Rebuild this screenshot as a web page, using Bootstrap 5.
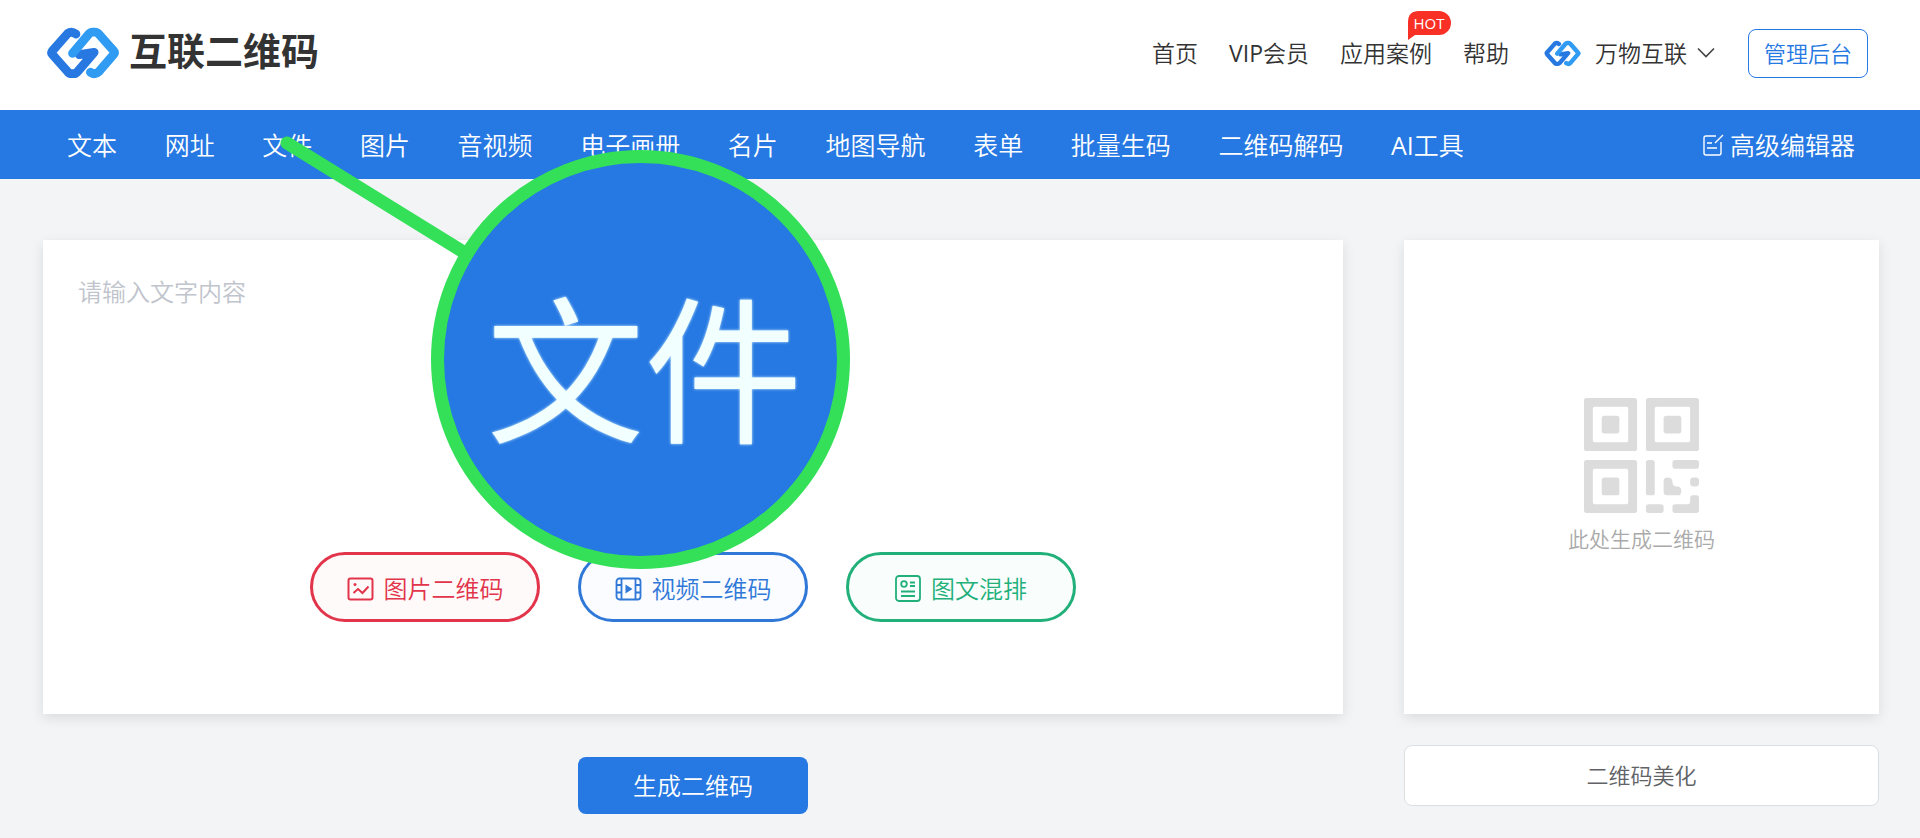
<!DOCTYPE html>
<html lang="zh-CN">
<head>
<meta charset="utf-8">
<meta name="viewport" content="width=device-width, initial-scale=1">
<title>互联二维码</title>
<link rel="stylesheet" href="https://cdn.jsdelivr.net/npm/bootstrap@5.3.0/dist/css/bootstrap.min.css">
<style>
  :root { --brand: #2678e3; --marker: #33e057; }
  body { font-family: "Open Sans", "Noto Sans CJK SC", sans-serif; font-weight: 350; background: #f2f4f6; color: #333; font-size: 24px; line-height: 36px; }
  a { text-decoration: none; color: inherit; }
  button.btn, .btn-mode, textarea { font-weight: 350; }
  .site-head { min-height: 110px; padding: 0 52px 4px 46px; background: #fff; }
  .brand-name { font-size: 38px; line-height: 48px; padding-bottom: 6px; font-weight: 700; color: #333; }
  .brand-link { gap: 9px; }
  .top-links { gap: 31px; font-size: 23px; }
  .user-link { gap: 14px; font-size: 23px; margin-left: 4px; }
  .user-name { gap: 10px; }
  .hot-tag { position: absolute; top: -24px; right: -19px; width: 44px; height: 29px; }
  .hot-tag span { position: absolute; inset: 0; text-align: center; color: #fff; font-size: 15px; line-height: 24px; font-weight: 400; }
  .btn-admin { --bs-btn-color: var(--brand); --bs-btn-border-color: var(--brand); --bs-btn-hover-bg: var(--brand); --bs-btn-hover-color: #fff; width: 120px; height: 49px; margin-left: 2px; padding: 0; font-size: 22px; border-radius: 8px; }
  .type-bar { min-height: 69px; padding: 0 65px 0 67px; background: var(--brand); color: #fff; gap: 238px; font-size: 25px; }
  .editor-link { gap: 6px; }
  .workspace { padding: 61px 41px 24px 43px; gap: 61px; }
  .result-col { width: 475px; }
  .panel { min-height: 474px; background: #fff; box-shadow: 0 4px 12px rgba(0, 0, 0, .1); }
  .editor-panel { padding: 34px 35px 92px; }
  .result-panel { padding-bottom: 2px; }
  .editor-text { flex: 1; border: 0; padding: 0; resize: none; outline: 0; font-size: 24px; line-height: 36px; background: transparent; }
  .editor-text::placeholder { color: #c0c4cc; }
  .mode-row { gap: 38px; }
  .btn-mode { width: 230px; height: 70px; border: 3px solid currentColor; border-radius: 35px; font-size: 24px; padding: 3px 0 0; gap: 10px; }
  .mode-red { color: #e2344a; background: #fffafa; }
  .mode-blue { color: #2f78d8; background: #fafcff; }
  .mode-green { color: #22b07a; background: #f9fefd; }
  .btn-make { width: 230px; height: 57px; margin-top: 43px; border-radius: 8px; font-size: 24px; background: var(--brand); color: #fff; padding: 0; }
  .btn-style { height: 61px; margin-top: 31px; border: 1px solid #dcdfe2; border-radius: 8px; font-size: 22px; background: #fff; color: #606266; padding: 0; }
  .qr-note { font-size: 21px; line-height: 32px; margin-top: 10px; color: #aaa; }
  .lens-line { position: absolute; left: 270px; top: 130px; pointer-events: none; }
  .lens { position: absolute; left: 431px; top: 150px; width: 419px; height: 419px; padding: 20px 0 0 8px; border: 13px solid var(--marker); border-radius: 50%; background: var(--brand); color: #f2ffff; font-size: 158px; font-weight: 400; line-height: 200px; text-shadow: 0 0 3px #d8f8ff; }
</style>
</head>
<body class="position-relative">
<svg class="d-none">
  <symbol id="logo" viewBox="50 49 218 154">
    <g fill="none" stroke-width="26" stroke-linejoin="round" stroke-linecap="round">
      <path stroke="#2878e2" d="M138 70Q125 60 114 68L68 120Q64 125 68 130L114 182Q118 187 124 187H132Q138 187 143 181L192 124L148 131"/>
      <path stroke="#309bf3" d="M128 127L176 70Q181 64 187 64H195Q201 64 206 70L250 120Q255 125 250 130L206 181Q195 192 181 183"/>
    </g>
  </symbol>
</svg>

<header class="site-head d-flex flex-wrap align-items-center justify-content-between">
  <a class="brand-link d-flex align-items-center" href="#">
    <svg width="74" height="52"><use href="#logo"/></svg>
    <span class="brand-name">互联二维码</span>
  </a>
  <nav class="top-links d-flex align-items-center">
    <a href="#">首页</a>
    <a href="#"><span class="fw-normal">VIP</span>会员</a>
    <a class="position-relative" href="#">应用案例
      <span class="hot-tag">
        <svg class="d-block" width="44" height="29" viewBox="0 0 44 29"><path fill="#f93026" d="M12 0H32A12 12 0 0 1 32 24H8L1 29V11Q1 0 12 0Z"/></svg>
        <span>HOT</span>
      </span>
    </a>
    <a href="#">帮助</a>
    <a class="user-link d-flex align-items-center" href="#">
      <svg width="37" height="27"><use href="#logo"/></svg>
      <span class="user-name d-flex align-items-center">万物互联
        <svg width="18" height="12" viewBox="0 0 18 12" fill="none" stroke="#444" stroke-width="1.6"><path d="M1 1.500l8 8 8-8"/></svg>
      </span>
    </a>
    <button class="btn btn-admin" type="button">管理后台</button>
  </nav>
</header>

<nav class="type-bar d-flex align-items-center">
  <ul class="list-unstyled d-flex flex-grow-1 justify-content-between mb-0">
    <li><a href="#">文本</a></li>
    <li><a href="#">网址</a></li>
    <li><a href="#">文件</a></li>
    <li><a href="#">图片</a></li>
    <li><a href="#">音视频</a></li>
    <li><a href="#">电子画册</a></li>
    <li><a href="#">名片</a></li>
    <li><a href="#">地图导航</a></li>
    <li><a href="#">表单</a></li>
    <li><a href="#">批量生码</a></li>
    <li><a href="#">二维码解码</a></li>
    <li><a href="#"><span class="fw-normal">AI</span>工具</a></li>
  </ul>
  <a class="editor-link d-flex align-items-center text-nowrap" href="#">
    <svg width="22" height="22" viewBox="0 0 22 22" fill="none" stroke="#fff" stroke-width="1.4"><path d="M14 2H4Q2 2 2 4V19Q2 21 4 21H17Q19 21 19 19V8M13 9L21 1M5 9H10M5 14H15"/></svg>
    高级编辑器
  </a>
</nav>

<main class="workspace d-flex">
  <section class="flex-grow-1 d-flex flex-column">
    <div class="panel editor-panel d-flex flex-column">
      <textarea class="editor-text w-100" aria-label="文字内容" placeholder="请输入文字内容"></textarea>
      <div class="mode-row d-flex justify-content-center">
        <button class="btn-mode mode-red d-flex align-items-center justify-content-center" type="button">
          <svg width="27" height="24" viewBox="0 0 27 24" fill="none" stroke="currentColor" stroke-width="2"><rect x="1.500" y="1.500" width="24" height="21" rx="2"/><circle cx="8" cy="7.500" r="1.500" fill="currentColor" stroke="none"/><path d="M6.500 16l4.500-4 4.500 4 6-6.500"/></svg>
          图片二维码
        </button>
        <button class="btn-mode mode-blue d-flex align-items-center justify-content-center" type="button">
          <svg width="27" height="24" viewBox="0 0 27 24" fill="none" stroke="currentColor" stroke-width="1.800"><rect x="1.500" y="1.500" width="24" height="21" rx="3"/><path d="M6.500 1.500v21M20.500 1.500v21M1.500 8h5M1.500 15.500h5M20.500 8h5M20.500 15.500h5"/><path fill="currentColor" stroke="none" d="M10.500 7.500l7 4.500-7 4.500z"/></svg>
          视频二维码
        </button>
        <button class="btn-mode mode-green d-flex align-items-center justify-content-center" type="button">
          <svg width="26" height="27" viewBox="0 0 26 27" fill="none" stroke="currentColor" stroke-width="1.800"><rect x="1" y="1" width="24" height="25" rx="3"/><circle cx="9" cy="9" r="2.800"/><path d="M15 7.500h5M15 11h5M6 16.500h14M6 21h14"/></svg>
          图文混排
        </button>
      </div>
    </div>
    <button class="btn btn-make align-self-center" type="button">生成二维码</button>
  </section>

  <aside class="result-col flex-shrink-0 d-flex flex-column">
    <div class="panel result-panel d-flex flex-column align-items-center justify-content-center">
      <svg width="115" height="115" viewBox="0 0 13 13" fill="#dcdcdc">
        <defs>
          <g id="finder"><path fill-rule="evenodd" d="M.3 0H5.700Q6 0 6 .3V5.700Q6 6 5.700 6H.3Q0 6 0 5.700V.3Q0 0 .3 0ZM1.200 1Q1 1 1 1.200V4.800Q1 5 1.200 5H4.800Q5 5 5 4.800V1.200Q5 1 4.800 1Z"/><rect x="2" y="2" width="2" height="2" rx=".3"/></g>
        </defs>
        <use href="#finder"/><use href="#finder" x="7"/><use href="#finder" y="7"/>
        <rect x="7" y="7" width="1" height="4" rx=".3"/>
        <rect x="10" y="7" width="3" height="1" rx=".3"/>
        <path d="M9.400 9Q10 9 10 9.500 10 10 10.500 10 11 10 11 10.500 11 11 10.600 11H9.400Q9 11 9 10.600V9.400Q9 9 9.400 9Z"/>
        <rect x="12" y="9" width="1" height="1" rx=".35"/>
        <rect x="7" y="12" width="2" height="1" rx=".3"/>
        <path d="M10.300 12H11.700Q12 12 12 11.700V11.300Q12 11 12.300 11H12.700Q13 11 13 11.300V12.700Q13 13 12.700 13H10.300Q10 13 10 12.700V12.300Q10 12 10.300 12Z"/>
      </svg>
      <div class="qr-note">此处生成二维码</div>
    </div>
    <button class="btn btn-style" type="button">二维码美化</button>
  </aside>
</main>

<svg class="lens-line" width="210" height="140" aria-hidden="true"><path d="M17 13L200 126" stroke="#33e057" stroke-width="13" stroke-linecap="round"/></svg>
<div class="lens d-flex align-items-center justify-content-center text-nowrap">文件</div>

<script src="https://cdn.jsdelivr.net/npm/bootstrap@5.3.0/dist/js/bootstrap.bundle.min.js"></script>
</body>
</html>
